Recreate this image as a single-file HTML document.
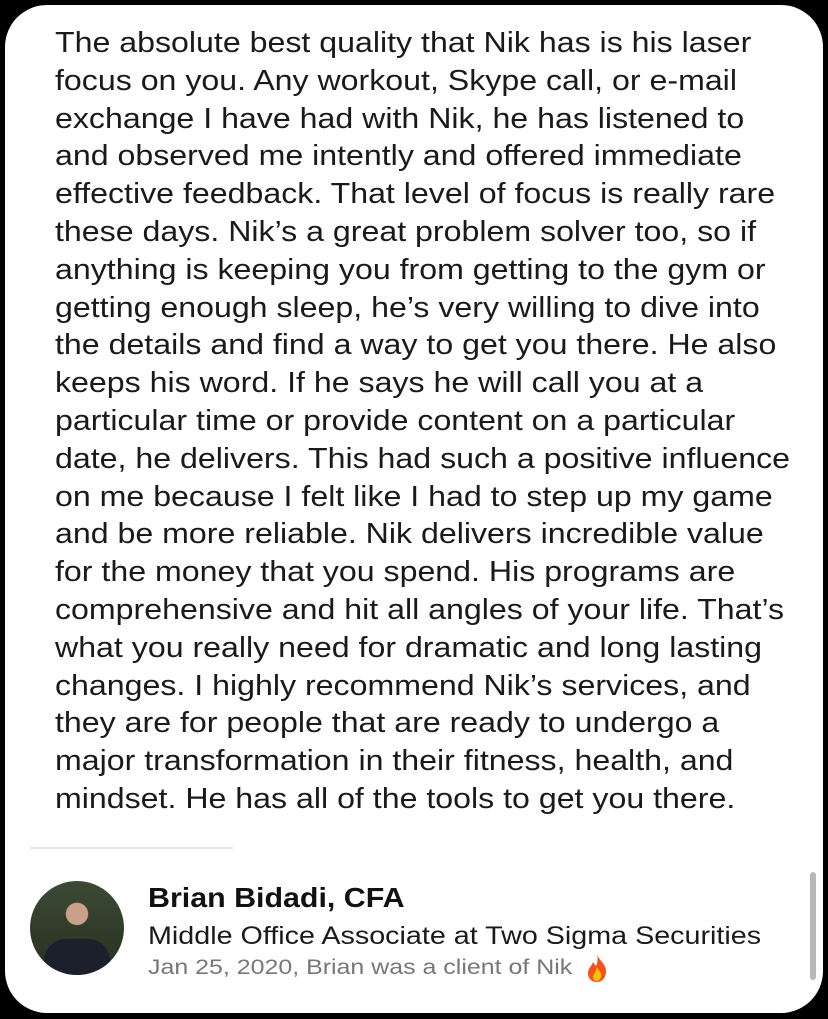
<!DOCTYPE html>
<html><head><style>
html,body{margin:0;padding:0;background:#000;width:828px;height:1019px;overflow:hidden}
.card{position:absolute;left:5px;top:5px;width:818px;height:1008px;background:#fff;border-radius:42px}
.t{position:absolute;left:55px;top:25px;font-family:"Liberation Sans",sans-serif;font-size:28.5px;line-height:37.8px;color:#1a1a1a;white-space:nowrap;transform:scaleX(1.127);transform-origin:0 0}
.sep{position:absolute;left:30px;top:847px;width:203px;height:2px;background:#e6e6e6}
.av{position:absolute;left:30px;top:881px;width:94px;height:94px;border-radius:50%;background:radial-gradient(circle at 50% 35%,#c9a08a 0 14%,transparent 15%),linear-gradient(#3c4a36,#26301f);overflow:hidden}
.av:after{content:"";position:absolute;left:14px;top:58px;width:66px;height:50px;background:#1c1f2c;border-radius:22px 22px 0 0}
.nm,.ti,.dt{transform-origin:0 0;white-space:nowrap}
.nm{position:absolute;left:148px;top:882px;font:bold 28px "Liberation Sans",sans-serif;color:#111;transform:scaleX(1.085)}
.ti{position:absolute;left:148px;top:922px;font:25px "Liberation Sans",sans-serif;color:#1a1a1a;transform:scaleX(1.148)}
.dt{position:absolute;left:148px;top:955px;font:21.5px "Liberation Sans",sans-serif;color:#777;transform:scaleX(1.16)}
.fl{position:absolute;left:586px;top:953px;width:22px;height:30px}
.sb{position:absolute;left:810px;top:872px;width:6px;height:108px;background:#b8b8b8;border-radius:3px}
</style></head><body>
<div class="card"></div>
<div class="t">The absolute best quality that Nik has is his laser<br>focus on you. Any workout, Skype call, or e-mail<br>exchange I have had with Nik, he has listened to<br>and observed me intently and offered immediate<br>effective feedback. That level of focus is really rare<br>these days. Nik’s a great problem solver too, so if<br>anything is keeping you from getting to the gym or<br>getting enough sleep, he’s very willing to dive into<br>the details and find a way to get you there. He also<br>keeps his word. If he says he will call you at a<br>particular time or provide content on a particular<br>date, he delivers. This had such a positive influence<br>on me because I felt like I had to step up my game<br>and be more reliable. Nik delivers incredible value<br>for the money that you spend. His programs are<br>comprehensive and hit all angles of your life. That’s<br>what you really need for dramatic and long lasting<br>changes. I highly recommend Nik’s services, and<br>they are for people that are ready to undergo a<br>major transformation in their fitness, health, and<br>mindset. He has all of the tools to get you there.</div>
<div class="sep"></div>
<div class="av"></div>
<div class="nm">Brian Bidadi, CFA</div>
<div class="ti">Middle Office Associate at Two Sigma Securities</div>
<div class="dt">Jan 25, 2020, Brian was a client of Nik</div>
<svg class="fl" viewBox="0 0 22 30"><path d="M11 1C13 8 21 11 20 20C19 26 15 29 11 29C6 29 2 26 2 20C2 15 6 13 7 9C9 12 10 13 10 13C12 9 12 5 11 1Z" fill="#f4511e"/><path d="M11 14C13 18 16 20 15 24C14 27 12 28 11 28C8 28 7 26 7 24C7 21 10 19 11 14Z" fill="#ffc107"/></svg>
<div class="sb"></div>
</body></html>
